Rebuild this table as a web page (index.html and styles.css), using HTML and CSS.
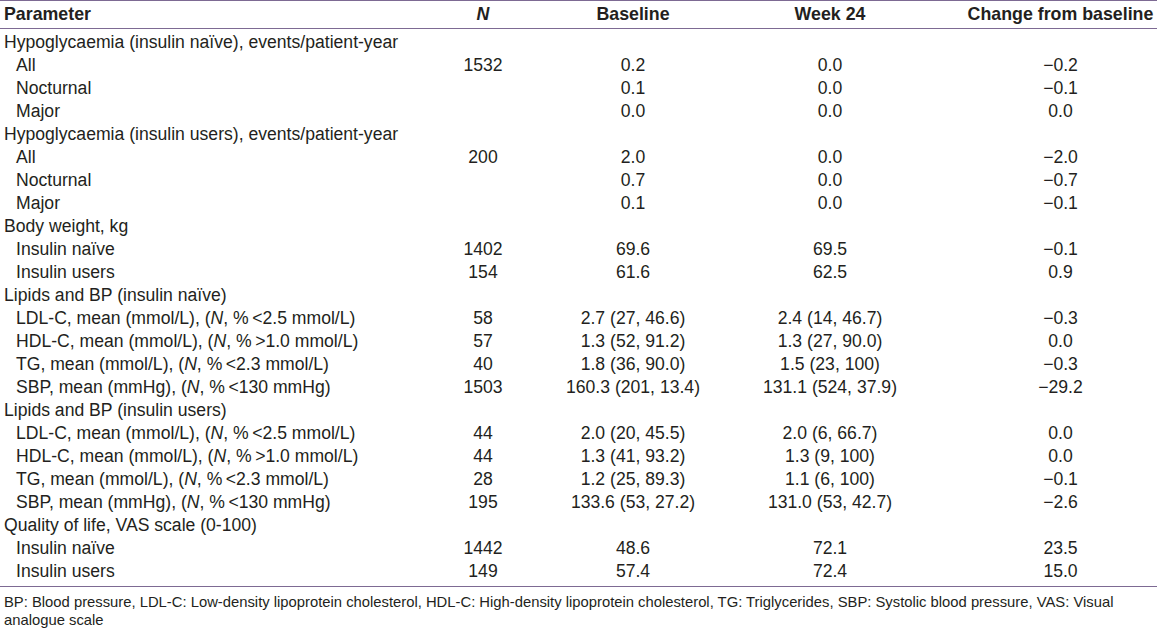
FILE: index.html
```html
<!DOCTYPE html>
<html>
<head>
<meta charset="utf-8">
<link rel="stylesheet" href="styles.css">
</head>
<body>
<div class="wrap">
<table class="data">
<colgroup>
<col class="c1"><col class="c2"><col class="c3"><col class="c4"><col class="c5">
</colgroup>
<thead>
<tr><th class="lt">Parameter</th><th><i>N</i></th><th>Baseline</th><th>Week 24</th><th class="chg">Change from baseline</th></tr>
</thead>
<tbody>
<tr class="first"><td class="lt">Hypoglycaemia (insulin naïve), events/patient-year</td><td></td><td></td><td></td><td class="chg"></td></tr>
<tr><td class="lt in">All</td><td>1532</td><td>0.2</td><td>0.0</td><td class="chg">−0.2</td></tr>
<tr><td class="lt in">Nocturnal</td><td></td><td>0.1</td><td>0.0</td><td class="chg">−0.1</td></tr>
<tr><td class="lt in">Major</td><td></td><td>0.0</td><td>0.0</td><td class="chg">0.0</td></tr>
<tr><td class="lt">Hypoglycaemia (insulin users), events/patient-year</td><td></td><td></td><td></td><td class="chg"></td></tr>
<tr><td class="lt in">All</td><td>200</td><td>2.0</td><td>0.0</td><td class="chg">−2.0</td></tr>
<tr><td class="lt in">Nocturnal</td><td></td><td>0.7</td><td>0.0</td><td class="chg">−0.7</td></tr>
<tr><td class="lt in">Major</td><td></td><td>0.1</td><td>0.0</td><td class="chg">−0.1</td></tr>
<tr><td class="lt">Body weight, kg</td><td></td><td></td><td></td><td class="chg"></td></tr>
<tr><td class="lt in">Insulin naïve</td><td>1402</td><td>69.6</td><td>69.5</td><td class="chg">−0.1</td></tr>
<tr><td class="lt in">Insulin users</td><td>154</td><td>61.6</td><td>62.5</td><td class="chg">0.9</td></tr>
<tr><td class="lt">Lipids and BP (insulin naïve)</td><td></td><td></td><td></td><td class="chg"></td></tr>
<tr><td class="lt in">LDL-C, mean (mmol/L), (<i>N</i>, %&#8201;&lt;2.5 mmol/L)</td><td>58</td><td>2.7 (27, 46.6)</td><td>2.4 (14, 46.7)</td><td class="chg">−0.3</td></tr>
<tr><td class="lt in">HDL-C, mean (mmol/L), (<i>N</i>, %&#8201;&gt;1.0 mmol/L)</td><td>57</td><td>1.3 (52, 91.2)</td><td>1.3 (27, 90.0)</td><td class="chg">0.0</td></tr>
<tr><td class="lt in">TG, mean (mmol/L), (<i>N</i>, %&#8201;&lt;2.3 mmol/L)</td><td>40</td><td>1.8 (36, 90.0)</td><td>1.5 (23, 100)</td><td class="chg">−0.3</td></tr>
<tr><td class="lt in">SBP, mean (mmHg), (<i>N</i>, %&#8201;&lt;130 mmHg)</td><td>1503</td><td>160.3 (201, 13.4)</td><td>131.1 (524, 37.9)</td><td class="chg">−29.2</td></tr>
<tr><td class="lt">Lipids and BP (insulin users)</td><td></td><td></td><td></td><td class="chg"></td></tr>
<tr><td class="lt in">LDL-C, mean (mmol/L), (<i>N</i>, %&#8201;&lt;2.5 mmol/L)</td><td>44</td><td>2.0 (20, 45.5)</td><td>2.0 (6, 66.7)</td><td class="chg">0.0</td></tr>
<tr><td class="lt in">HDL-C, mean (mmol/L), (<i>N</i>, %&#8201;&gt;1.0 mmol/L)</td><td>44</td><td>1.3 (41, 93.2)</td><td>1.3 (9, 100)</td><td class="chg">0.0</td></tr>
<tr><td class="lt in">TG, mean (mmol/L), (<i>N</i>, %&#8201;&lt;2.3 mmol/L)</td><td>28</td><td>1.2 (25, 89.3)</td><td>1.1 (6, 100)</td><td class="chg">−0.1</td></tr>
<tr><td class="lt in">SBP, mean (mmHg), (<i>N</i>, %&#8201;&lt;130 mmHg)</td><td>195</td><td>133.6 (53, 27.2)</td><td>131.0 (53, 42.7)</td><td class="chg">−2.6</td></tr>
<tr><td class="lt">Quality of life, VAS scale (0-100)</td><td></td><td></td><td></td><td class="chg"></td></tr>
<tr><td class="lt in">Insulin naïve</td><td>1442</td><td>48.6</td><td>72.1</td><td class="chg">23.5</td></tr>
<tr class="last"><td class="lt in">Insulin users</td><td>149</td><td>57.4</td><td>72.4</td><td class="chg">15.0</td></tr>
</tbody>
</table>
<p class="note">BP: Blood pressure, LDL-C: Low-density lipoprotein cholesterol, HDL-C: High-density lipoprotein cholesterol, TG: Triglycerides, SBP: Systolic blood pressure, VAS: Visual analogue scale</p>
</div>
</body>
</html>
```

FILE: styles.css
```css
html, body {
  margin: 0;
  padding: 0;
  background: #ffffff;
}
body {
  font-family: "Liberation Sans", Arial, sans-serif;
  color: #231f20;
}
.wrap {
  width: 1157px;
}
.data {
  width: 1157px;
  border-collapse: collapse;
  table-layout: fixed;
  border-top: 1px solid #7d6a93;
  border-bottom: 1px solid #7d6a93;
  font-size: 17.6px;
}
.c1 { width: 427px; }
.c2 { width: 112px; }
.c3 { width: 188px; }
.c4 { width: 206px; }
.c5 { width: 224px; }
.data th {
  font-weight: bold;
  font-size: 17.8px;
  text-align: center;
  height: 27px;
  line-height: 27px;
  padding: 0;
  border-bottom: 1px solid #7d6a93;
  white-space: nowrap;
}
.data td {
  text-align: center;
  height: 23px;
  line-height: 23px;
  padding: 0;
  white-space: nowrap;
}
.data .lt {
  text-align: left;
  padding-left: 4px;
}
.data .in {
  padding-left: 16px;
}
.data .chg {
  padding-left: 31px;
}
.data tr.first td {
  padding-top: 2px;
}
.data tr.last td {
  padding-bottom: 3px;
}
.note {
  margin: 0;
  padding: 6px 4px 0 4px;
  font-size: 14.8px;
  line-height: 18px;
}
```
